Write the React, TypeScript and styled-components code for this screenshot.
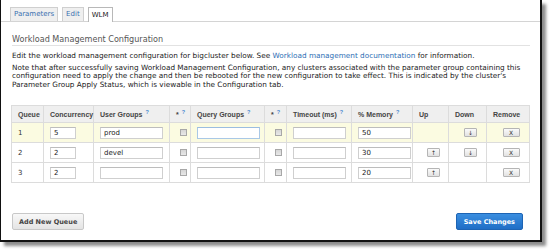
import React from "react";
import styled, { createGlobalStyle } from "styled-components";

const GlobalStyle = createGlobalStyle`
  html, body { margin: 0; padding: 0; background: #fff; }
  body {
    width: 550px;
    height: 251px;
    overflow: hidden;
    font-family: "DejaVu Sans", Verdana, sans-serif;
    color: #222;
  }
`;

const Frame = styled.div`
  box-sizing: border-box;
  width: 542px;
  height: 242px;
  border: 2px solid #111;
  border-top: none;
  border-left-width: 1px;
  box-shadow: 4px 4px 3px rgba(0, 0, 0, 0.45);
  background: #fff;
  padding-top: 7px;
`;

const TabBar = styled.div`
  display: flex;
  gap: 4px;
  padding-left: 9px;
  border-bottom: 1px solid #d4d4d4;
  height: 14px;
`;

const Tab = styled.div<{ $active?: boolean }>`
  box-sizing: border-box;
  height: ${(p) => (p.$active ? 15 : 14)}px;
  padding: 0 3px;
  border: 1px solid ${(p) => (p.$active ? "#b8b8b8" : "#cfcfcf")};
  border-bottom: none;
  background: ${(p) => (p.$active ? "#fff" : "#efefef")};
  color: ${(p) => (p.$active ? "#222" : "#3a70b0")};
  font-size: 7px;
  line-height: 13px;
  display: flex;
  align-items: center;
`;

const Content = styled.div`
  padding: 0 10px 0 10px;
`;

const Heading = styled.div`
  margin: 12px 0 0 1px;
  padding-bottom: 1px;
  border-bottom: 1px solid #e2e2e2;
  font-size: 8.1px;
  color: #555;
  line-height: 10px;
`;

const Para = styled.p<{ $gap: number }>`
  margin: ${(p) => p.$gap}px 0 0 1px;
  font-size: 7.3px;
  line-height: 8.5px;
  color: #222;
  white-space: nowrap;
`;

const Link = styled.span`
  color: #2f6fb5;
`;

const Table = styled.table`
  margin-top: 16px;
  width: 518px;
  table-layout: fixed;
  border-collapse: collapse;
  border: 1px solid #dcdcdc;
`;

const Th = styled.th`
  box-sizing: border-box;
  height: 17px;
  padding: 0 0 0 6px;
  text-align: left;
  font-family: "Liberation Sans", Arial, sans-serif;
  font-size: 7px;
  font-weight: bold;
  color: #444;
  background: #efefef;
  border: 1px solid #dcdcdc;
  white-space: nowrap;
`;

const Help = styled.sup`
  color: #4b8ccf;
  font-size: 5.5px;
  margin-left: 3px;
  vertical-align: 3px;
  line-height: 0;
`;

const Tr = styled.tr<{ $hl?: boolean }>`
  background: ${(p) => (p.$hl ? "#fbfbe1" : "#fff")};
`;

const Td = styled.td<{ $center?: boolean }>`
  box-sizing: border-box;
  height: 20px;
  padding: 0 0 0 6px;
  border: 1px solid #dcdcdc;
  font-size: 7px;
  color: #333;
  text-align: ${(p) => (p.$center ? "center" : "left")};
  vertical-align: middle;
`;

const Input = styled.input<{ $w: number; $focus?: boolean }>`
  box-sizing: border-box;
  width: ${(p) => p.$w}px;
  height: 12px;
  margin: 0;
  padding: 0 3px;
  border: 1px solid ${(p) => (p.$focus ? "#a9c8e6" : "#cfcfcf")};
  border-top-color: ${(p) => (p.$focus ? "#9bbde0" : "#bdbdbd")};
  background: #fff;
  font-family: "DejaVu Sans", Verdana, sans-serif;
  font-size: 7px;
  color: #222;
  display: block;
  outline: none;
`;

const Check = styled.span`
  display: block;
  box-sizing: border-box;
  width: 7px;
  height: 7px;
  margin: 0 auto;
  border: 1px solid #a8a8a8;
  background: linear-gradient(#d6d6d6, #e8e8e8);
`;

const MiniButton = styled.button<{ $w: number }>`
  box-sizing: border-box;
  width: ${(p) => p.$w}px;
  height: 9px;
  margin: 0 auto;
  padding: 0;
  border: 1px solid #b5b5b5;
  border-radius: 1px;
  background: linear-gradient(#fafafa, #e2e2e2);
  font-family: "DejaVu Sans", Verdana, sans-serif;
  font-size: 6px;
  line-height: 7px;
  color: #333;
  display: block;
`;

const Footer = styled.div`
  display: flex;
  justify-content: space-between;
  margin-top: 30px;
  padding: 0 7px 0 1px;
`;

const Button = styled.button<{ $primary?: boolean }>`
  box-sizing: border-box;
  height: 17px;
  padding: 0 ${(p) => (p.$primary ? 7 : 6)}px;
  border: 1px solid ${(p) => (p.$primary ? "#1d64b4" : "#c8c8c8")};
  border-radius: 2px;
  background: ${(p) =>
    p.$primary
      ? "linear-gradient(#3a8ee0, #1f6ec6)"
      : "linear-gradient(#f8f8f8, #e4e4e4)"};
  color: ${(p) => (p.$primary ? "#fff" : "#444")};
  font-family: "DejaVu Sans", Verdana, sans-serif;
  font-weight: bold;
  font-size: 6.5px;
`;

type Row = {
  q: number;
  c: string;
  ug: string;
  m: string;
  up: boolean;
  down: boolean;
};

const rows: Row[] = [
  { q: 1, c: "5", ug: "prod", m: "50", up: false, down: true },
  { q: 2, c: "2", ug: "devel", m: "30", up: true, down: true },
  { q: 3, c: "2", ug: "", m: "20", up: true, down: false },
];

const widths = [32, 50, 76, 21, 74, 22, 65, 61, 36, 38, 43];

export default function App() {
  return (
    <>
      <GlobalStyle />
      <Frame>
        <TabBar>
          <Tab>Parameters</Tab>
          <Tab>Edit</Tab>
          <Tab $active>WLM</Tab>
        </TabBar>
        <Content>
          <Heading>Workload Management Configuration</Heading>
          <Para $gap={6}>
            Edit the workload management configuration for bigcluster below. See{" "}
            <Link>Workload management documentation</Link> for information.
          </Para>
          <Para $gap={3}>
            Note that after successfully saving Workload Management Configuration, any clusters
            associated with the parameter group containing this
            <br />
            configuration need to apply the change and then be rebooted for the new configuration
            to take effect. This is indicated by the cluster's
            <br />
            Parameter Group Apply Status, which is viewable in the Configuration tab.
          </Para>
          <Table>
            <colgroup>
              {widths.map((w, i) => (
                <col key={i} style={{ width: w }} />
              ))}
            </colgroup>
            <thead>
              <tr>
                <Th>Queue</Th>
                <Th>Concurrency</Th>
                <Th>
                  User Groups<Help>?</Help>
                </Th>
                <Th>
                  *<Help>?</Help>
                </Th>
                <Th>
                  Query Groups<Help>?</Help>
                </Th>
                <Th>
                  *<Help>?</Help>
                </Th>
                <Th>
                  Timeout (ms)<Help>?</Help>
                </Th>
                <Th>
                  % Memory<Help>?</Help>
                </Th>
                <Th>Up</Th>
                <Th>Down</Th>
                <Th>Remove</Th>
              </tr>
            </thead>
            <tbody>
              {rows.map((r) => (
                <Tr key={r.q} $hl={r.q === 1}>
                  <Td>{r.q}</Td>
                  <Td>
                    <Input $w={26} defaultValue={r.c} />
                  </Td>
                  <Td>
                    <Input $w={63} defaultValue={r.ug} />
                  </Td>
                  <Td $center>
                    <Check />
                  </Td>
                  <Td>
                    <Input $w={63} $focus={r.q === 1} defaultValue="" />
                  </Td>
                  <Td $center>
                    <Check />
                  </Td>
                  <Td>
                    <Input $w={53} defaultValue="" />
                  </Td>
                  <Td>
                    <Input $w={53} defaultValue={r.m} />
                  </Td>
                  <Td>{r.up && <MiniButton $w={13}>↑</MiniButton>}</Td>
                  <Td>{r.down && <MiniButton $w={13}>↓</MiniButton>}</Td>
                  <Td>
                    <MiniButton $w={17}>X</MiniButton>
                  </Td>
                </Tr>
              ))}
            </tbody>
          </Table>
          <Footer>
            <Button>Add New Queue</Button>
            <Button $primary>Save Changes</Button>
          </Footer>
        </Content>
      </Frame>
    </>
  );
}
